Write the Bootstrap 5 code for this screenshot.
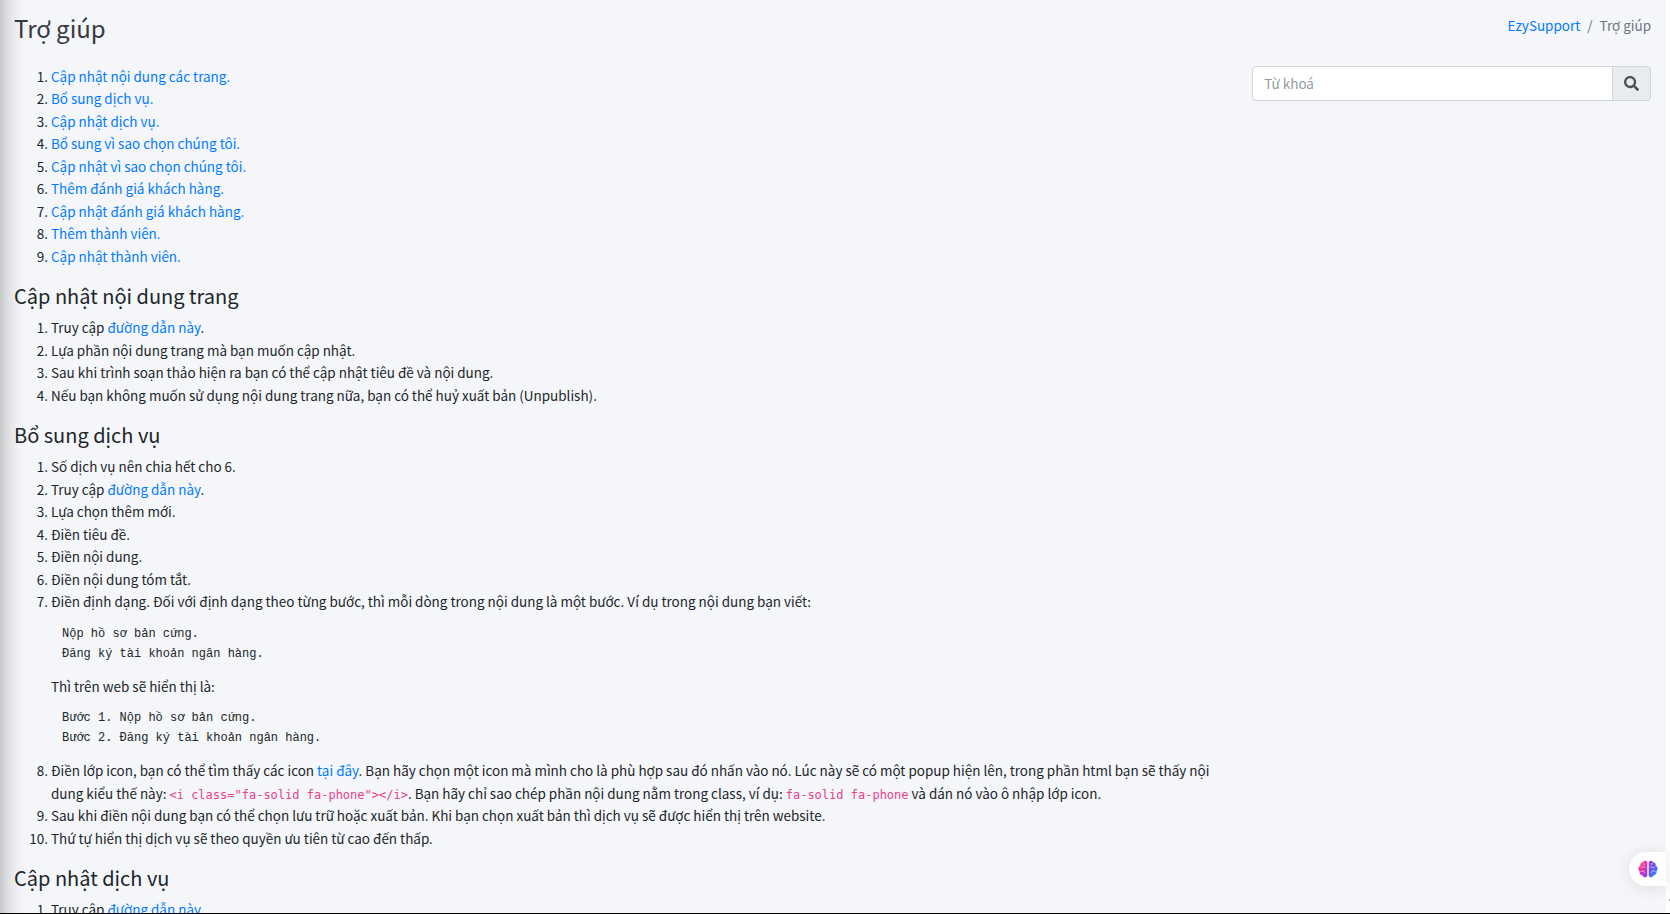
<!DOCTYPE html>
<html lang="vi">
<head>
<meta charset="utf-8">
<meta name="viewport" content="width=device-width, initial-scale=1">
<title>Trợ giúp</title>
<link href="https://cdn.jsdelivr.net/npm/bootstrap@5.3.0/dist/css/bootstrap.min.css" rel="stylesheet">
<style>
:root { font-size: 15px; }
body { font-family: "Noto Sans CJK SC", "Open Sans", sans-serif; font-size: 15px; font-size-adjust: .488; line-height: 1.5; color: #212529; background: #fff; border-bottom: 1px solid #000; }
a { color: #007bff; text-decoration: none; }
a:hover { text-decoration: underline; }
.content-wrapper { background: #f4f6f9; margin-right: 4px; padding: 0 8px 0 7px; }
.content-wrapper::before { content: ""; position: absolute; inset: 0 auto 0 0; width: 26px; background: linear-gradient(to right, rgba(0,0,0,.2), rgba(0,0,0,.12) 20%, rgba(0,0,0,.05) 50%, rgba(0,0,0,.015) 75%, transparent); pointer-events: none; }
.row { --bs-gutter-x: 14px; margin: 0; }
.content-header { padding: 14px 0 15px; }
.page-title { font-size: 24px; font-size-adjust: none; line-height: 28px; font-weight: 400; color: #343a40; margin: 0; }
.section-title { font-size: 20px; font-size-adjust: none; line-height: 27px; font-weight: 400; margin: 0 0 7px; }
ol.steps { padding-left: 37px; margin-bottom: 15px; }
.breadcrumb { --bs-breadcrumb-item-padding-x: 7px; --bs-breadcrumb-divider-color: #6c757d; --bs-breadcrumb-item-active-color: #6c757d; font-size: 15px; }
pre, code { font-size: 12px; font-size-adjust: none; }
pre { font-family: "Liberation Mono", monospace; line-height: 20px; padding: 11px; margin: 0; overflow: auto; }
code { font-family: "DejaVu Sans Mono", monospace; line-height: 1; color: #e83e8c; }
.search-panel { padding-top: 1px; }
.input-group .form-control { height: 35px; font-size: 15px; font-size-adjust: .488; padding: 5px 11px; border-color: #ced4da; border-radius: 4px; color: #495057; }
.form-control::placeholder { color: #939ba2; opacity: 1; }
.btn-search { height: 35px; width: 39px; padding: 0; background: #e9ecef; border: 1px solid #ced4da; border-radius: 4px; color: #495057; }
.assistant-tab { right: 4px; bottom: 27px; width: 37px; height: 34px; background: #fff; border: 0; border-radius: 17px 0 0 17px; box-shadow: 0 2px 16px rgba(0,0,0,.1); padding: 0 0 0 9px; }
.scroll-mark { right: 0; bottom: 12px; width: 1px; height: 2px; background: #aaa; }
</style>
</head>
<body class="vh-100 overflow-hidden d-flex flex-column position-relative">
<main class="content-wrapper flex-grow-1 overflow-hidden">
  <header class="content-header">
    <div class="row">
      <div class="col-6"><h1 class="page-title">Trợ giúp</h1></div>
      <nav class="col-6" aria-label="breadcrumb">
        <ol class="breadcrumb justify-content-end mb-0">
          <li class="breadcrumb-item"><a href="#">EzySupport</a></li>
          <li class="breadcrumb-item active" aria-current="page">Trợ giúp</li>
        </ol>
      </nav>
    </div>
  </header>
  <div class="row pt-2">
    <article class="col-9">
      <ol class="steps">
        <li><a href="#s1">Cập nhật nội dung các trang.</a></li>
        <li><a href="#s2">Bổ sung dịch vụ.</a></li>
        <li><a href="#s3">Cập nhật dịch vụ.</a></li>
        <li><a href="#s4">Bổ sung vì sao chọn chúng tôi.</a></li>
        <li><a href="#s5">Cập nhật vì sao chọn chúng tôi.</a></li>
        <li><a href="#s6">Thêm đánh giá khách hàng.</a></li>
        <li><a href="#s7">Cập nhật đánh giá khách hàng.</a></li>
        <li><a href="#s8">Thêm thành viên.</a></li>
        <li><a href="#s9">Cập nhật thành viên.</a></li>
      </ol>
      <h2 class="section-title" id="s1">Cập nhật nội dung trang</h2>
      <ol class="steps">
        <li>Truy cập <a href="#">đường dẫn này</a>.</li>
        <li>Lựa phần nội dung trang mà bạn muốn cập nhật.</li>
        <li>Sau khi trình soạn thảo hiện ra bạn có thể cập nhật tiêu đề và nội dung.</li>
        <li>Nếu bạn không muốn sử dụng nội dung trang nữa, bạn có thể huỷ xuất bản (Unpublish).</li>
      </ol>
      <h2 class="section-title" id="s2">Bổ sung dịch vụ</h2>
      <ol class="steps">
        <li>Số dịch vụ nên chia hết cho 6.</li>
        <li>Truy cập <a href="#">đường dẫn này</a>.</li>
        <li>Lựa chọn thêm mới.</li>
        <li>Điền tiêu đề.</li>
        <li>Điền nội dung.</li>
        <li>Điền nội dung tóm tắt.</li>
        <li>Điền định dạng. Đối với định dạng theo từng bước, thì mỗi dòng trong nội dung là một bước. Ví dụ trong nội dung bạn viết:
<pre>Nộp hồ sơ bản cứng.
Đăng ký tài khoản ngân hàng.</pre>
          Thì trên web sẽ hiển thị là:
<pre>Bước 1. Nộp hồ sơ bản cứng.
Bước 2. Đăng ký tài khoản ngân hàng.</pre>
        </li>
        <li>Điền lớp icon, bạn có thể tìm thấy các icon <a href="#">tại đây</a>. Bạn hãy chọn một icon mà mình cho là phù hợp sau đó nhấn vào nó. Lúc này sẽ có một popup hiện lên, trong phần html bạn sẽ thấy nội dung kiểu thế này: <code>&lt;i class="fa-solid fa-phone"&gt;&lt;/i&gt;</code>. Bạn hãy chỉ sao chép phần nội dung nằm trong class, ví dụ: <code>fa-solid fa-phone</code> và dán nó vào ô nhập lớp icon.</li>
        <li>Sau khi điền nội dung bạn có thể chọn lưu trữ hoặc xuất bản. Khi bạn chọn xuất bản thì dịch vụ sẽ được hiển thị trên website.</li>
        <li>Thứ tự hiển thị dịch vụ sẽ theo quyền ưu tiên từ cao đến thấp.</li>
      </ol>
      <h2 class="section-title" id="s3">Cập nhật dịch vụ</h2>
      <ol class="steps">
        <li>Truy cập <a href="#">đường dẫn này</a>.</li>
      </ol>
    </article>
    <aside class="col-3 search-panel">
      <form class="input-group" role="search">
        <input type="search" class="form-control" placeholder="Từ khoá" aria-label="Từ khoá">
        <button type="button" class="btn btn-search d-flex align-items-center justify-content-center" aria-label="Tìm kiếm">
          <svg width="15" height="15" viewBox="0 0 512 512" fill="currentColor" aria-hidden="true"><path d="M505 442.700 405.300 343c-4.500-4.500-10.600-7-17-7H372c27.600-35.300 44-79.700 44-128C416 93.100 322.900 0 208 0S0 93.100 0 208s93.100 208 208 208c48.300 0 92.700-16.400 128-44v16.300c0 6.400 2.500 12.500 7 17l99.700 99.700c9.400 9.400 24.600 9.400 33.900 0l28.300-28.300c9.400-9.400 9.400-24.600.1-34zM208 336c-70.700 0-128-57.200-128-128 0-70.700 57.200-128 128-128 70.700 0 128 57.200 128 128 0 70.700-57.200 128-128 128z"/></svg>
        </button>
      </form>
    </aside>
  </div>
</main>
<button type="button" class="assistant-tab position-absolute d-flex align-items-center" aria-label="Trợ lý">
  <svg width="20" height="18" viewBox="0 0 20 18" aria-hidden="true">
    <defs>
      <linearGradient id="lobeL" x1="0" y1="0" x2=".6" y2="1"><stop offset="0" stop-color="#ff8a2a"/><stop offset=".4" stop-color="#f5359a"/><stop offset="1" stop-color="#9a35ee"/></linearGradient>
      <linearGradient id="lobeR" x1="0" y1="0" x2=".7" y2="1"><stop offset="0" stop-color="#b03fe0"/><stop offset=".5" stop-color="#6c4df0"/><stop offset="1" stop-color="#1a9bff"/></linearGradient>
    </defs>
    <path fill="url(#lobeL)" d="M9.300 2.500C9.300.2 5.500 0 5 2.200 2.800 2.200 1.800 4.200 2.500 5.700 0 6.500-.2 10 1.500 11c-.5 2.400 1 4 2.900 4.200C5 18 9.300 17.800 9.300 15.300z"/>
    <path fill="url(#lobeR)" d="M10.700 2.500c0-2.300 3.800-2.500 4.300-.3 2.200 0 3.200 2 2.500 3.500 2.500.8 2.700 4.300 1 5.300.5 2.400-1 4-2.900 4.200-.6 2.800-4.900 2.600-4.900.1z"/>
    <path fill="none" stroke="#fff" stroke-opacity=".7" stroke-width=".8" d="M3 7.500l3-1 1.500 1.500M2.500 11.500l3-.5 1.500 2M5 3.500l2 1.500M17 7l-3 1-1.500-2M17.500 11.500l-3-1-1.500 2.500M15 3.500l-2 1"/>
  </svg>
</button>
<span class="scroll-mark position-absolute"></span>
<script src="https://cdn.jsdelivr.net/npm/bootstrap@5.3.0/dist/js/bootstrap.bundle.min.js"></script>
</body>
</html>
